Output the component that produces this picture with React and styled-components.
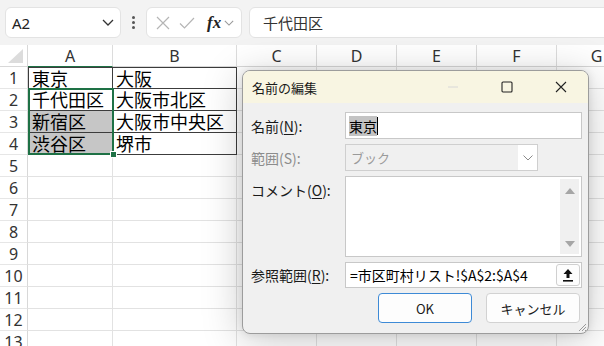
import React from "react";
import styled, { createGlobalStyle } from "styled-components";

const Global = createGlobalStyle`
  html, body { margin: 0; padding: 0; }
  body {
    width: 604px;
    height: 346px;
    overflow: hidden;
    background: #ffffff;
    font-family: "Noto Sans CJK JP", "Noto Sans", sans-serif;
  }
`;

const UI = `"Noto Sans", "Noto Sans CJK JP", sans-serif`;
const JP = `"Noto Sans CJK JP", "Noto Sans", sans-serif`;

const columns = ["A", "B", "C", "D", "E", "F", "G"];
const widths = [85, 124, 80, 80, 80, 80, 80];
const data = [
  ["東京", "大阪"],
  ["千代田区", "大阪市北区"],
  ["新宿区", "大阪市中央区"],
  ["渋谷区", "堺市"],
];

export default function App() {
  const rows = Array.from({ length: 13 }, (_, i) => i + 1);
  return (
    <Page>
      <Global />
      <Toolbar>
        <NameBox>
          <span>A2</span>
          <Chevron />
        </NameBox>
        <Dots>
          <i /><i /><i />
        </Dots>
        <FuncBox>
          <svg width="14" height="14" viewBox="0 0 14 14">
            <path d="M1 1L13 13M13 1L1 13" stroke="#b5b5b5" strokeWidth="1.2" fill="none" />
          </svg>
          <svg width="16" height="14" viewBox="0 0 16 14">
            <path d="M1 7.5L5.5 12L15 2" stroke="#b5b5b5" strokeWidth="1.2" fill="none" />
          </svg>
          <Fx>fx</Fx>
          <Chevron small />
        </FuncBox>
        <FormulaBox>千代田区</FormulaBox>
      </Toolbar>

      <Sheet>
        <Corner>
          <svg width="16" height="14" viewBox="0 0 16 14">
            <path d="M15 0L15 14L0 14Z" fill="#dcdcdc" />
          </svg>
        </Corner>
        {columns.map((c, i) => (
          <ColHead key={c} $selected={i === 0}>{c}</ColHead>
        ))}
        {rows.map((r) => (
          <React.Fragment key={r}>
            <RowHead>{r}</RowHead>
            {columns.map((c, ci) => {
              const value = data[r - 1] && data[r - 1][ci];
              const boxed = r <= 4 && ci <= 1;
              const shaded = ci === 0 && (r === 3 || r === 4);
              return (
                <Cell
                  key={c}
                  $boxed={boxed}
                  $top={boxed && r === 1}
                  $left={boxed && ci === 0}
                  $shaded={shaded}
                >
                  {value}
                  {r === 2 && ci === 0 && (
                    <Selection>
                      <FillHandle />
                    </Selection>
                  )}
                </Cell>
              );
            })}
          </React.Fragment>
        ))}
      </Sheet>

      <Dialog>
        <TitleBar>
          <Title>名前の編集</Title>
          <WinButtons>
            <WinButton>
              <svg width="12" height="12" viewBox="0 0 12 12">
                <path d="M1 6H11" stroke="#d8d8d8" strokeWidth="1" />
              </svg>
            </WinButton>
            <WinButton>
              <svg width="12" height="12" viewBox="0 0 12 12">
                <rect x="1" y="1" width="10" height="10" rx="1" stroke="#222" strokeWidth="1.1" fill="none" />
              </svg>
            </WinButton>
            <WinButton>
              <svg width="12" height="12" viewBox="0 0 12 12">
                <path d="M1 1L11 11M11 1L1 11" stroke="#222" strokeWidth="1.1" fill="none" />
              </svg>
            </WinButton>
          </WinButtons>
        </TitleBar>
        <Body>
          <Form>
            <Label>名前(<u>N</u>):</Label>
            <TextField>
              <Highlight>東京</Highlight>
              <Caret />
            </TextField>

            <Label $disabled>範囲(S):</Label>
            <SelectField>
              <SelectText>ブック</SelectText>
              <SelectArrow>
                <svg width="10" height="6" viewBox="0 0 10 6">
                  <path d="M0.5 0.5L5 5L9.5 0.5" stroke="#8a8a8a" strokeWidth="1" fill="none" />
                </svg>
              </SelectArrow>
            </SelectField>

            <Label $top>コメント(<u>O</u>):</Label>
            <Comment>
              <ScrollBar>
                <svg width="10" height="6" viewBox="0 0 10 6">
                  <path d="M0 6L5 0L10 6Z" fill="#a6a6a6" />
                </svg>
                <svg width="10" height="6" viewBox="0 0 10 6">
                  <path d="M0 0L5 6L10 0Z" fill="#a6a6a6" />
                </svg>
              </ScrollBar>
            </Comment>

            <Label>参照範囲(<u>R</u>):</Label>
            <RefField>
              <RefText>=市区町村リスト!$A$2:$A$4</RefText>
              <RefButton>
                <svg width="12" height="14" viewBox="0 0 12 14">
                  <path d="M6 1L1.5 6H4.5V10H7.5V6H10.5Z" fill="#111" />
                  <rect x="1" y="12" width="10" height="1.6" fill="#111" />
                </svg>
              </RefButton>
            </RefField>
          </Form>
          <Buttons>
            <Button $primary>OK</Button>
            <Button>キャンセル</Button>
          </Buttons>
          <Grip>
            <svg width="10" height="10" viewBox="0 0 10 10">
              <path d="M9 2L2 9M9 5L5 9M9 8L8 9" stroke="#9a9a9a" strokeWidth="1" />
            </svg>
          </Grip>
        </Body>
      </Dialog>
    </Page>
  );
}

function Chevron({ small }) {
  return (
    <svg width={small ? 10 : 12} height={small ? 6 : 7} viewBox="0 0 12 7">
      <path d="M1 1L6 6L11 1" stroke={small ? "#999" : "#333"} strokeWidth="1.3" fill="none" />
    </svg>
  );
}

const Page = styled.div`
  position: relative;
  width: 604px;
  height: 346px;
  overflow: hidden;
  background: #ffffff;
`;

const Toolbar = styled.div`
  height: 45px;
  box-sizing: border-box;
  padding: 7px 0 0 5px;
  background: #f3f3f3;
  display: flex;
  align-items: flex-start;
`;

const Box = styled.div`
  height: 31px;
  box-sizing: border-box;
  background: #ffffff;
  border: 1px solid #e3e3e3;
  border-radius: 6px;
  display: flex;
  align-items: center;
`;

const NameBox = styled(Box)`
  width: 116px;
  padding: 0 6px 0 6px;
  justify-content: space-between;
  font-family: ${UI};
  font-size: 15px;
  color: #222;
`;

const Dots = styled.div`
  width: 25px;
  height: 31px;
  display: flex;
  flex-direction: column;
  align-items: center;
  justify-content: center;
  gap: 2px;
  i {
    width: 3px;
    height: 3px;
    border-radius: 50%;
    background: #555;
  }
`;

const FuncBox = styled(Box)`
  width: 96px;
  padding: 0 5px 0 9px;
  gap: 9px;
`;

const Fx = styled.span`
  font-family: "Liberation Serif", serif;
  font-style: italic;
  font-weight: bold;
  font-size: 17px;
  color: #222;
  margin-left: 3px;
  margin-right: -6px;
`;

const FormulaBox = styled(Box)`
  flex: 1;
  margin-left: 7px;
  margin-right: -10px;
  padding-left: 13px;
  font-family: ${JP};
  font-size: 15px;
  color: #333;
`;

const Sheet = styled.div`
  display: grid;
  grid-template-columns: 28px ${widths.map((w) => w + "px").join(" ")};
  grid-template-rows: 22px repeat(13, 22px);
`;

const Corner = styled.div`
  background: #ffffff;
  border-right: 1px solid #d8d8d8;
  border-bottom: 1px solid #d8d8d8;
  display: flex;
  align-items: flex-end;
  justify-content: flex-end;
  padding: 0 3px 3px 0;
`;

const ColHead = styled.div`
  box-sizing: border-box;
  background: #ffffff;
  border-right: 1px solid #dcdcdc;
  border-bottom: 1px solid ${(p) => (p.$selected ? "#1e7145" : "#d8d8d8")};
  font-family: ${UI};
  font-size: 16px;
  color: #333;
  text-align: center;
  line-height: 22px;
`;

const RowHead = styled.div`
  box-sizing: border-box;
  background: #ffffff;
  border-right: 1px solid #d8d8d8;
  border-bottom: 1px solid #e6e6e6;
  font-family: ${UI};
  font-size: 16px;
  color: #333;
  text-align: center;
  line-height: 22px;
`;

const Cell = styled.div`
  position: relative;
  box-sizing: border-box;
  background: ${(p) => (p.$shaded ? "#c6c6c6" : "#ffffff")};
  border-right: 1px solid ${(p) => (p.$boxed ? "#3c3c3c" : "#e2e2e2")};
  border-bottom: 1px solid ${(p) => (p.$boxed ? "#3c3c3c" : "#e2e2e2")};
  ${(p) => p.$top && "border-top: 1px solid #3c3c3c;"}
  ${(p) => p.$left && "border-left: 1px solid #3c3c3c;"}
  padding-left: 3px;
  font-family: ${JP};
  font-size: 18px;
  line-height: 21px;
  color: #000;
  white-space: nowrap;
`;

const Selection = styled.div`
  position: absolute;
  left: -1px;
  top: -1px;
  width: 86px;
  height: 67px;
  box-sizing: border-box;
  border: 2px solid #1e7145;
  z-index: 2;
  pointer-events: none;
`;

const FillHandle = styled.div`
  position: absolute;
  right: -5px;
  bottom: -5px;
  width: 5px;
  height: 5px;
  background: #1e7145;
  border: 1px solid #ffffff;
`;

const Dialog = styled.div`
  position: absolute;
  left: 242px;
  top: 70px;
  z-index: 5;
  width: 347px;
  height: 264px;
  box-sizing: border-box;
  border: 1px solid #9c9c9c;
  border-radius: 8px;
  overflow: hidden;
  background: #f0f0f0;
  box-shadow: 0 6px 40px rgba(0, 0, 0, 0.22), 0 0 8px rgba(0, 0, 0, 0.1);
  display: flex;
  flex-direction: column;
`;

const TitleBar = styled.div`
  height: 32px;
  flex-shrink: 0;
  background: #f8f5e2;
  display: flex;
  align-items: center;
  justify-content: space-between;
  padding-left: 9px;
`;

const Title = styled.div`
  font-family: ${JP};
  font-size: 13px;
  color: #1a1a1a;
`;

const WinButtons = styled.div`
  display: flex;
  height: 100%;
`;

const WinButton = styled.div`
  width: 54px;
  height: 100%;
  display: flex;
  align-items: center;
  justify-content: center;
`;

const Body = styled.div`
  position: relative;
  flex: 1;
  padding: 9px 6px 0 8px;
  display: flex;
  flex-direction: column;
  gap: 5px;
`;

const Form = styled.div`
  display: grid;
  grid-template-columns: 94px 1fr;
  grid-template-rows: 27px 27px 81px 26px;
  row-gap: 5px;
`;

const Label = styled.div`
  font-family: ${JP};
  font-size: 14px;
  color: ${(p) => (p.$disabled ? "#8c8c8c" : "#1a1a1a")};
  display: flex;
  align-items: ${(p) => (p.$top ? "flex-start" : "center")};
  padding-top: ${(p) => (p.$top ? "4px" : "0")};
  u {
    text-underline-offset: 2px;
  }
`;

const Field = styled.div`
  box-sizing: border-box;
  border: 1px solid #c8c8c8;
  background: #ffffff;
  display: flex;
  align-items: center;
`;

const TextField = styled(Field)`
  padding-left: 3px;
  font-family: ${JP};
  font-size: 14px;
  color: #000;
`;

const Highlight = styled.span`
  background: #c3c3c3;
  line-height: 20px;
`;

const Caret = styled.span`
  width: 1px;
  height: 18px;
  background: #000;
`;

const SelectField = styled(Field)`
  width: 193px;
  background: #f0f0f0;
  border-color: #cfcfcf;
  justify-content: space-between;
`;

const SelectText = styled.span`
  padding-left: 5px;
  font-family: ${JP};
  font-size: 13px;
  color: #9a9a9a;
`;

const SelectArrow = styled.div`
  width: 19px;
  height: 100%;
  background: #ffffff;
  display: flex;
  align-items: center;
  justify-content: center;
`;

const Comment = styled(Field)`
  align-items: stretch;
  justify-content: flex-end;
  padding: 2px;
`;

const ScrollBar = styled.div`
  width: 19px;
  background: #f0f0f0;
  display: flex;
  flex-direction: column;
  align-items: center;
  justify-content: space-between;
  padding: 9px 0 7px;
`;

const RefField = styled(Field)`
  justify-content: space-between;
  padding: 1px;
`;

const RefText = styled.span`
  padding-left: 3px;
  font-family: ${JP};
  font-size: 14px;
  color: #000;
`;

const RefButton = styled.div`
  width: 24px;
  height: 100%;
  box-sizing: border-box;
  border: 1px solid #d0d0d0;
  border-radius: 3px;
  background: #fdfdfd;
  display: flex;
  align-items: center;
  justify-content: center;
`;

const Buttons = styled.div`
  display: flex;
  justify-content: flex-end;
  gap: 14px;
  padding-right: 2px;
`;

const Button = styled.div`
  width: 94px;
  height: 30px;
  box-sizing: border-box;
  border: 1px solid ${(p) => (p.$primary ? "#3d8ad6" : "#d2d2d2")};
  border-radius: 4px;
  background: #fdfdfd;
  display: flex;
  align-items: center;
  justify-content: center;
  font-family: ${JP};
  font-size: 13px;
  color: #1a1a1a;
`;

const Grip = styled.div`
  position: absolute;
  right: 1px;
  bottom: 1px;
  line-height: 0;
`;
